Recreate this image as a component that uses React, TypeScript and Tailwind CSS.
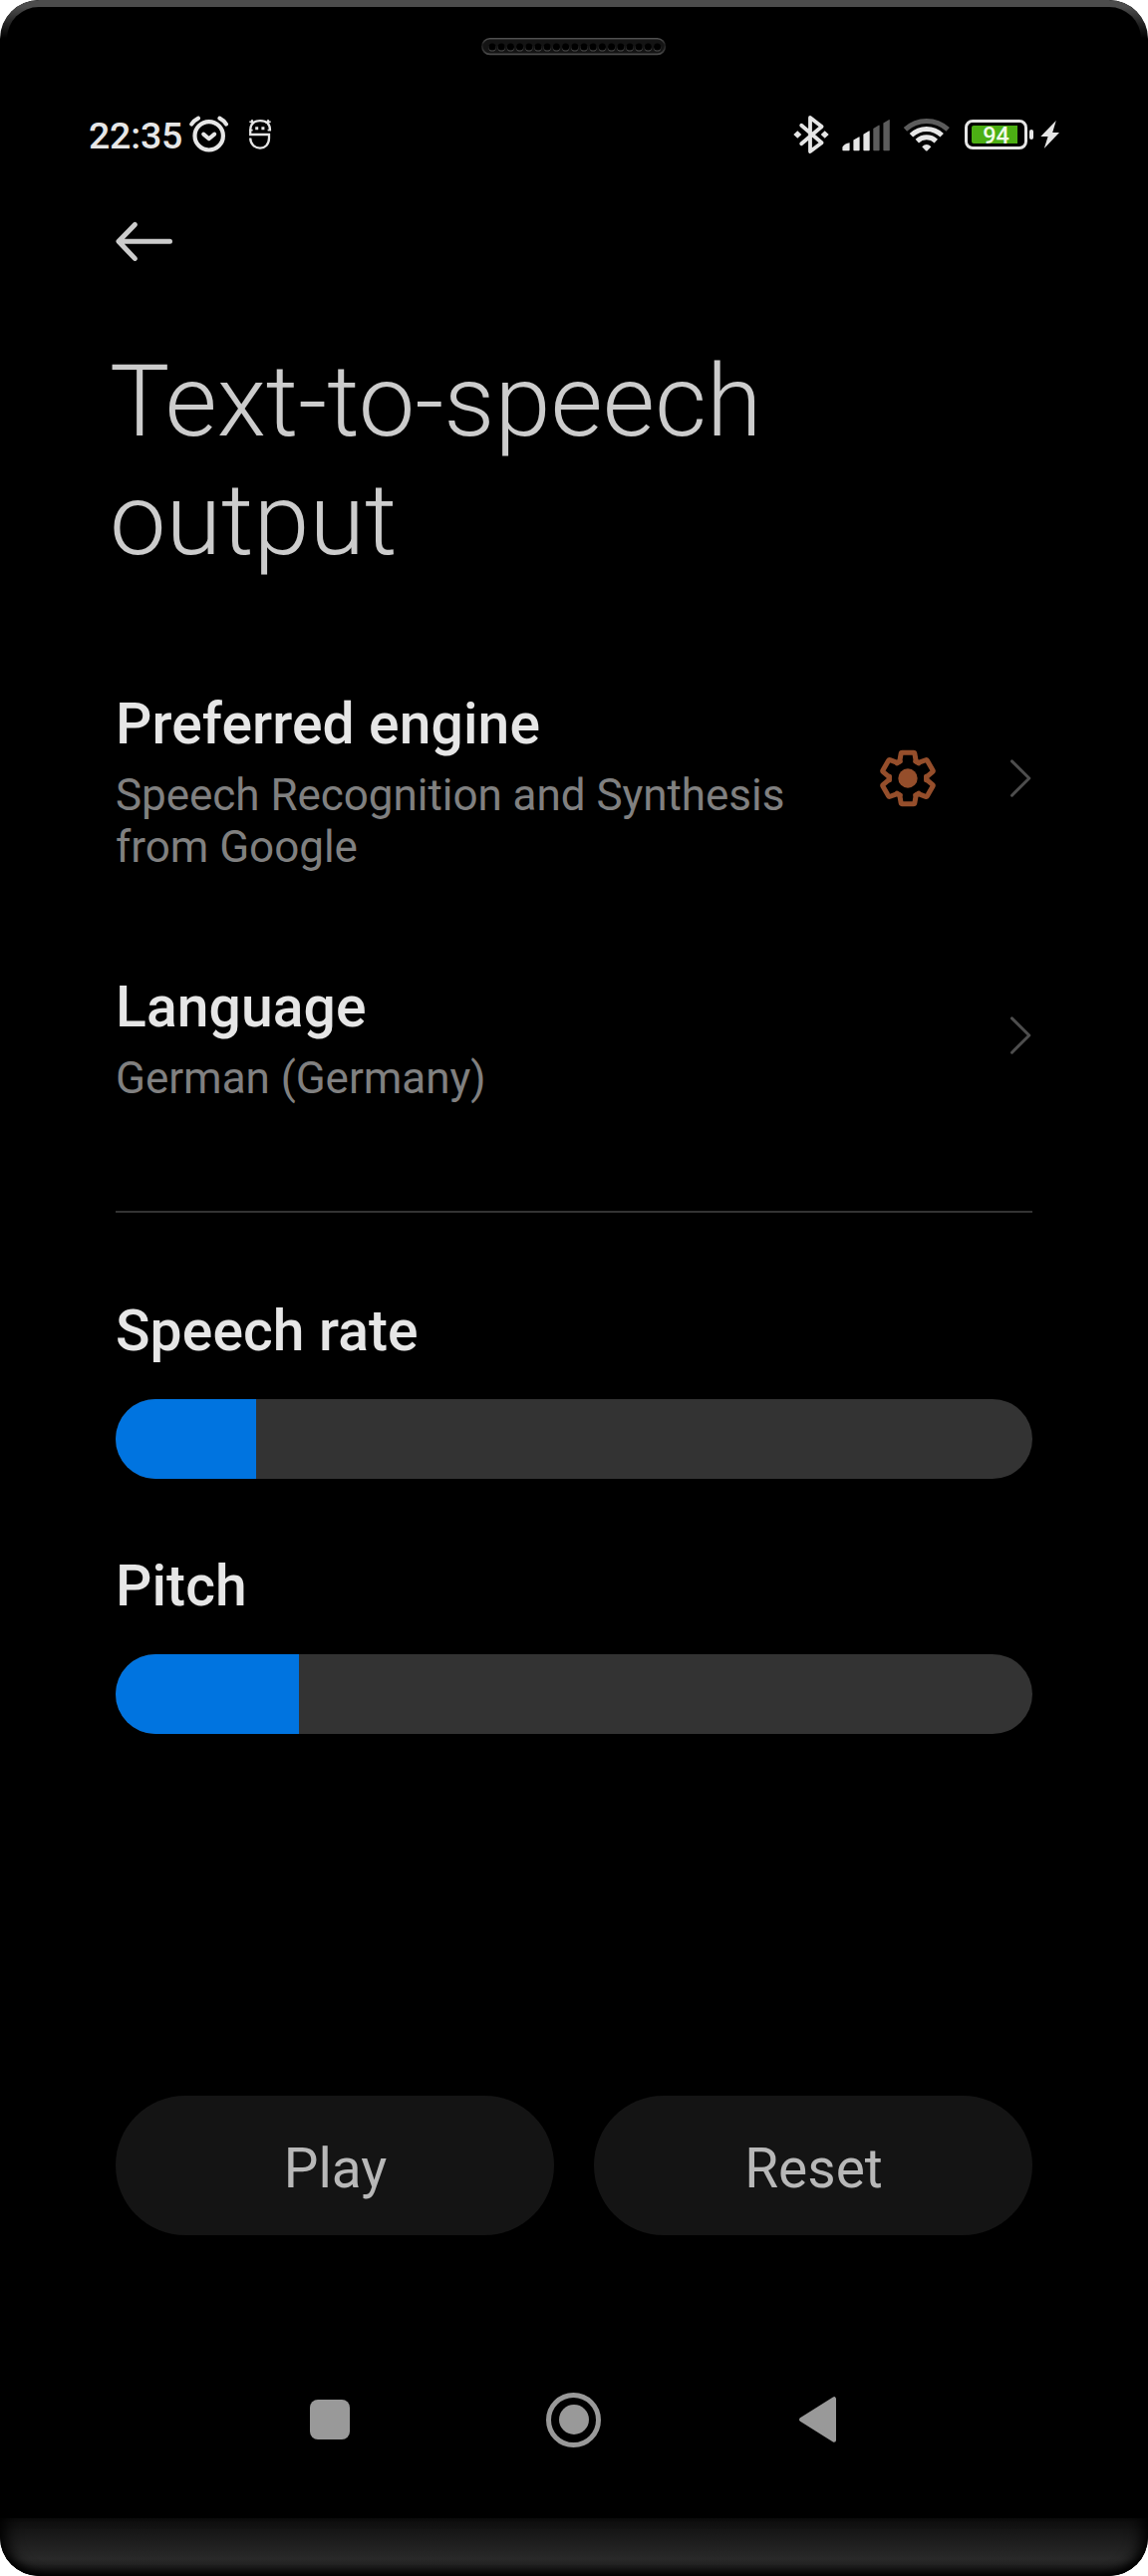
import React from "react";

const SPEAKER_HOLES = Array.from({ length: 19 }, (_, i) => 11 + i * 9.2);
const GEAR_TOOTH_ANGLES = [0, 60, 120, 180, 240, 300];

function SpeakerGrille() {
  return (
    <svg width="186" height="18" viewBox="0 0 186 18">
      <defs>
        <linearGradient id="grille" x1="0" y1="0" x2="0" y2="1">
          <stop offset="0" stopColor="#505050" />
          <stop offset="0.4" stopColor="#1c1c1c" />
          <stop offset="1" stopColor="#4a4a4a" />
        </linearGradient>
      </defs>
      <rect x="0.8" y="0.8" width="183.6" height="15.6" rx="7.8" fill="#141414" stroke="url(#grille)" strokeWidth="1.6" />
      {SPEAKER_HOLES.map((x) => (
        <g key={x}>
          <circle cx={x} cy="9.9" r="3.7" fill="#484848" />
          <circle cx={x} cy="9" r="3.6" fill="#000" />
        </g>
      ))}
    </svg>
  );
}

function AlarmIcon() {
  return (
    <svg width="40" height="38" viewBox="0 0 40 38" fill="none" stroke="#e6e6e6" strokeLinecap="round" strokeLinejoin="round">
      <circle cx="19.7" cy="20.3" r="14.2" strokeWidth="4.2" />
      <path d="M14.2 18.6l5.5 4.6 5.5-4.6" strokeWidth="4" />
      <path d="M2.2 8.6Q5 4.6 9 2.6M37 8.6Q34.4 4.6 30.4 2.6" strokeWidth="4" />
    </svg>
  );
}

function BotIcon() {
  return (
    <svg width="24" height="32" viewBox="0 0 24 32" fill="none" stroke="#e6e6e6" strokeWidth="2.3">
      <path d="M22 11.8C22 5.2 18 2.2 12 2.2S2.2 5.2 2.2 11.8V16H21V19.6C21 26 17 29.6 12 29.6S2.2 26 2.2 19.6" />
      <path d="M1.2 11.6h3.4M19.6 11.6h3.4M1.4 3.2l5 1M22.6 3.2l-5 1M3.6 1.2l1.2 3M20.4 1.2l-1.2 3" strokeWidth="1.8" />
      <path d="M7.2 9.8h3M13.4 9.8h3" strokeWidth="3" />
    </svg>
  );
}

function BluetoothIcon() {
  return (
    <svg width="36" height="40" viewBox="0 0 36 40" fill="none" stroke="#e6e6e6" strokeWidth="3.8" strokeLinejoin="round" strokeLinecap="round">
      <path d="M8.2 10.8L28.6 28.2 17 37V3L28.6 12 8.2 29.2" />
      <path d="M.3 20l4-3.7 4 3.7-4 3.7zM27.7 20l4-3.7 4 3.7-4 3.7z" fill="#e6e6e6" stroke="none" />
    </svg>
  );
}

function SignalIcon() {
  return (
    <svg width="48" height="32" viewBox="0 0 48 32" fill="#e6e6e6">
      <path d="M1 31.3h5.8q.8 0 .8-.8v-7.2q-4.6.4-7.2 4.2v3q0 .8.6.8z" />
      <path d="M11.4 20.6l5.8-3.4q.4 0 .4.6v12.7q0 .8-.8.8h-4.6q-.8 0-.8-.8z" />
      <path d="M21.4 14.8l5.8-3.6q.5 0 .5.6v18.7q0 .8-.8.8h-4.7q-.8 0-.8-.8z" />
      <g fill="#5c5c5c">
        <path d="M31.3 9l5.8-3.6q.5 0 .5.6v24.5q0 .8-.8.8h-4.7q-.8 0-.8-.8z" />
        <path d="M41.4 3.4L47.3.1q.5 0 .5.6v29.8q0 .8-.8.8h-4.8q-.8 0-.8-.8z" />
      </g>
    </svg>
  );
}

function WifiIcon() {
  return (
    <svg width="48" height="34" viewBox="0 0 48 34" fill="none" stroke="#e6e6e6" strokeWidth="5">
      <path d="M2.4 11.8Q11.6 3.4 23.8 3.4T45.2 11.8" stroke="#5c5c5c" />
      <path d="M8.4 17.8Q15 11.5 23.8 11.5T39.2 17.8" />
      <path d="M14.3 23.6Q18.4 19.8 23.8 19.8T33.3 23.6" />
      <path d="M19.2 29.2Q23.8 24.6 28.4 29.2L24.6 33.2Q23.8 34 23 33.2z" fill="#e6e6e6" stroke="none" />
    </svg>
  );
}

function Battery() {
  return (
    <div className="flex items-center">
      <div className="flex h-[30px] w-[63px] items-center rounded-[8px] border-3 border-[#e6e6e6] pl-[4px]">
        <div className="flex h-[18px] w-[46px] items-center justify-center rounded-l-[2px] bg-[#4caf14] pt-[2px] pl-[3px] text-[23.5px] leading-[18px] font-medium text-[#f2fbe9]">
          94
        </div>
      </div>
      <div className="ml-[2px] h-[10px] w-[4px] rounded-[2px] bg-[#e6e6e6]" />
    </div>
  );
}

function ChargingIcon() {
  return (
    <svg width="20" height="28" viewBox="0 0 20 28" fill="#e6e6e6">
      <path d="M15.8 0L.3 16H7.6L3.8 28 19 12H12.2z" />
    </svg>
  );
}

function StatusBar() {
  return (
    <div className="flex h-[60px] items-center pr-[88px] pl-[89px]">
      <span className="w-[95px] text-[37.5px] leading-[44px] font-medium tracking-[-0.2px] text-[#e6e6e6]">22:35</span>
      <div className="mb-[3px] ml-[6px]"><AlarmIcon /></div>
      <div className="mb-[2px] ml-[19px]"><BotIcon /></div>
      <div className="mb-[2px] ml-auto flex items-center">
        <BluetoothIcon />
        <div className="mt-[2px] ml-[13px]"><SignalIcon /></div>
        <div className="ml-[13px]"><WifiIcon /></div>
        <div className="ml-[14px]"><Battery /></div>
        <div className="ml-[7px]"><ChargingIcon /></div>
      </div>
    </div>
  );
}

function BackArrow() {
  return (
    <svg width="58" height="50" viewBox="0 0 58 50" fill="none" stroke="#cccccc" strokeWidth="5" strokeLinecap="round" strokeLinejoin="round">
      <path d="M54.5 25.3H3.5M19.3 8.4L3 25.3 19.3 42.4" />
    </svg>
  );
}

function GearIcon() {
  return (
    <svg width="60" height="60" viewBox="-30 -30 60 60" fill="none" stroke="#954e2b" strokeWidth="5" strokeLinejoin="round" strokeLinecap="round">
      {GEAR_TOOTH_ANGLES.map((angle) => (
        <path key={angle} transform={`rotate(${angle})`} d="M-10.8-15.2L-8.2-17-6.9-24.6Q-6.7-25.7-5.6-25.7H5.6Q6.7-25.7 6.9-24.6L8.2-17 10.8-15.2" />
      ))}
      <circle r="9.7" fill="#954e2b" stroke="none" />
    </svg>
  );
}

function Chevron() {
  return (
    <svg width="24" height="40" viewBox="0 0 24 40" fill="none" stroke="#4d4d4d" strokeWidth="3" strokeLinecap="round" strokeLinejoin="round">
      <path d="M3.5 2.9L20.8 20 3.5 37.2" />
    </svg>
  );
}

function SettingRow({ title, value, gear }: { title: string; value: string; gear?: boolean }) {
  return (
    <div className="flex items-center">
      <div className="w-[700px]">
        <h2 className="text-[57px] leading-[68px] font-medium tracking-[0.1px] text-[#e6e6e6]">{title}</h2>
        <p className="mt-[11px] text-[44px] leading-[52px] tracking-[-0.04px] text-[#808080]">{value}</p>
      </div>
      <div className="mb-[8px] ml-auto flex items-center gap-[71px]">
        {gear && <GearIcon />}
        <Chevron />
      </div>
    </div>
  );
}

function Slider({ label, value }: { label: string; value: number }) {
  return (
    <div>
      <h2 className="text-[57px] leading-[68px] font-medium tracking-[0.1px] text-[#e6e6e6]">{label}</h2>
      <div className="mt-[34px] h-[80px] overflow-hidden rounded-full bg-[#333333]">
        <div className="h-full bg-[#0074e0]" style={{ width: `${value}px` }} />
      </div>
    </div>
  );
}

function PillButton({ children }: { children: React.ReactNode }) {
  return (
    <button className="h-[140px] flex-1 rounded-full bg-[#141414] pt-[6px] pl-px text-[55px] leading-[66px] text-[#b8b8b8]">
      {children}
    </button>
  );
}

function NavigationBar() {
  return (
    <div className="flex h-[56px] items-center">
      <div className="ml-[311px] size-[40px] rounded-[8px] bg-[#999999]" />
      <div className="ml-[197px] flex size-[55px] items-center justify-center rounded-full border-[5px] border-[#999999]">
        <div className="size-[30px] rounded-full bg-[#999999]" />
      </div>
      <svg className="ml-[198px]" width="40" height="48" viewBox="0 0 40 48" fill="#999999" stroke="#999999" strokeWidth="4" strokeLinejoin="round">
        <path d="M3 24L36 3.2V44.8z" />
      </svg>
    </div>
  );
}

export default function App() {
  return (
    <div className="bg-white font-[Roboto,sans-serif]">
      <div className="relative flex h-[2585px] w-[1152px] flex-col overflow-hidden rounded-[39px] bg-black">
        <div className="pointer-events-none absolute inset-x-0 top-0 h-[60px] rounded-t-[39px] border-x-[7px] border-t-[7px] border-[#4c4c4c] [mask-image:linear-gradient(to_bottom,black_7px,transparent_38px)]" />
        <div className="flex h-[106px] justify-center pt-[38px]">
          <SpeakerGrille />
        </div>
        <StatusBar />
        <main className="flex flex-col px-[116px]">
          <div className="mt-[51px]"><BackArrow /></div>
          <h1 className="mt-[76px] -ml-[6px] w-[800px] text-[101px] leading-[119px] font-light text-[#cccccc]">
            Text-to-speech output
          </h1>
          <div className="mt-[112px]">
            <SettingRow title="Preferred engine" value="Speech Recognition and Synthesis from Google" gear />
          </div>
          <div className="mt-[101px]">
            <SettingRow title="Language" value="German (Germany)" />
          </div>
          <div className="mt-[107px] h-[2px] bg-[#333333]" />
          <div className="mt-[85px] flex flex-col gap-[74px]">
            <Slider label="Speech rate" value={141} />
            <Slider label="Pitch" value={184} />
          </div>
          <div className="mt-[363px] flex gap-[40px]">
            <PillButton>Play</PillButton>
            <PillButton>Reset</PillButton>
          </div>
        </main>
        <div className="mt-[157px]"><NavigationBar /></div>
        <div className="mt-auto h-[58px] rounded-b-[39px] bg-linear-to-b from-[#0e0e0e] via-[#292929] via-70% to-[#1c1c1c] shadow-[inset_14px_0_16px_-8px_#000,inset_-14px_0_16px_-8px_#000,inset_0_-10px_10px_-5px_#000]" />
      </div>
    </div>
  );
}
